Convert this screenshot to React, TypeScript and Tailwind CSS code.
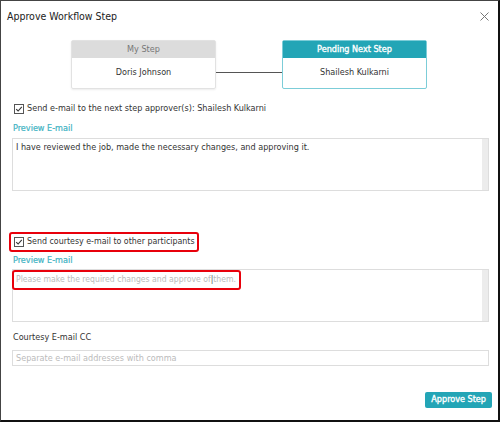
import React from "react";

const font = { fontFamily: '"DejaVu Sans Condensed", "DejaVu Sans", sans-serif' };

function Check() {
  return (
    <svg width="10" height="10" viewBox="0 0 10 10" className="shrink-0">
      <rect x="0.5" y="0.5" width="9" height="9" fill="white" stroke="#555" strokeWidth="1" />
      <path d="M2.2 5.2 L4.1 7 L7.8 2.8" fill="none" stroke="#333" strokeWidth="1.1" />
    </svg>
  );
}

export default function App() {
  return (
    <div
      className="w-[500px] h-[422px] bg-white border-l border-t border-[#444] border-r-2 border-b-2 border-r-[#111] border-b-[#111] text-[#333] relative text-[9px] whitespace-nowrap"
      style={font}
    >
      <div className="flex items-center justify-between pl-[6px] pr-[9px] pt-[6px] h-[26px]">
        <span className="text-[10.5px] text-[#222]">Approve Workflow Step</span>
        <svg width="9" height="9" viewBox="0 0 9 9" className="mt-[-2px]">
          <path d="M0.5 0.5 L8.5 8.5 M8.5 0.5 L0.5 8.5" stroke="#777" strokeWidth="1" />
        </svg>
      </div>

      <div className="flex items-center justify-center mt-[13px] pr-[1px]">
        <div className="w-[145px] h-[49px] border border-[#e2e2e2] rounded-[2px] flex flex-col shadow-[0_1px_2px_rgba(0,0,0,0.08)]">
          <div className="h-[17px] bg-[#dcdcdc] text-[#777] flex items-center justify-center">My Step</div>
          <div className="flex-1 flex items-center justify-center text-[#333]">Doris Johnson</div>
        </div>
        <div className="w-[66px] h-px bg-[#555] mt-[15px]" />
        <div className="w-[145px] h-[49px] border border-[#7ccdd8] rounded-[2px] flex flex-col">
          <div className="h-[17px] bg-[#23a5b6] text-white [-webkit-text-stroke:0.35px_white] flex items-center justify-center">Pending Next Step</div>
          <div className="flex-1 flex items-center justify-center text-[#333]">Shailesh Kulkarni</div>
        </div>
      </div>

      <div className="px-[11px]">
        <div className="flex items-center gap-[3px] mt-[14px] ml-[2px] h-[12px]">
          <Check />
          <span>Send e-mail to the next step approver(s): Shailesh Kulkarni</span>
        </div>
        <div className="mt-[7px] ml-[1px] text-[#3eb3c3] [-webkit-text-stroke:0.2px_#3eb3c3] h-[12px] leading-[12px]">Preview E-mail</div>
        <div className="mt-[4px] h-[53px] w-[477px] border border-[#ddd] relative">
          <div className="pl-[3px] pt-[2px] text-[#333]">I have reviewed the job, made the necessary changes, and approving it.</div>
          <div className="absolute right-0 top-0 bottom-0 w-[6px] bg-[#ececec]" />
        </div>

        <div className="mt-[41px] ml-[-3px] w-[190px] h-[20px] border-2 border-[#e8000b] rounded-[3px] flex items-center gap-[3px] pl-[3px]">
          <Check />
          <span className="text-[8.8px]">Send courtesy e-mail to other participants</span>
        </div>
        <div className="mt-[2px] ml-[1px] text-[#3eb3c3] [-webkit-text-stroke:0.2px_#3eb3c3] h-[12px] leading-[12px]">Preview E-mail</div>
        <div className="mt-[3px] h-[53px] w-[477px] border border-[#ddd] relative">
          <div className="absolute left-[-1px] top-[0px] w-[229px] h-[20px] border-2 border-[#e8000b] rounded-[3px]" />
          <div className="pl-[3px] pt-[3px] text-[#bbb] text-[8.6px]">Please make the required changes and approve of<span className="text-[#555]">|</span>them.</div>
          <div className="absolute right-0 top-0 bottom-0 w-[6px] bg-[#ececec]" />
        </div>

        <div className="mt-[9px] ml-[1px] text-[#333] h-[12px] leading-[12px]">Courtesy E-mail CC</div>
        <div className="mt-[7px] h-[16px] w-[477px] border border-[#ddd] text-[#bbb] pl-[3px] leading-[14px]">Separate e-mail addresses with comma</div>
      </div>

      <div className="absolute right-[6px] top-[391px] h-[16px] px-[6px] bg-[#23a5b6] rounded-[2px] text-white [-webkit-text-stroke:0.35px_white] flex items-center">Approve Step</div>
    </div>
  );
}
